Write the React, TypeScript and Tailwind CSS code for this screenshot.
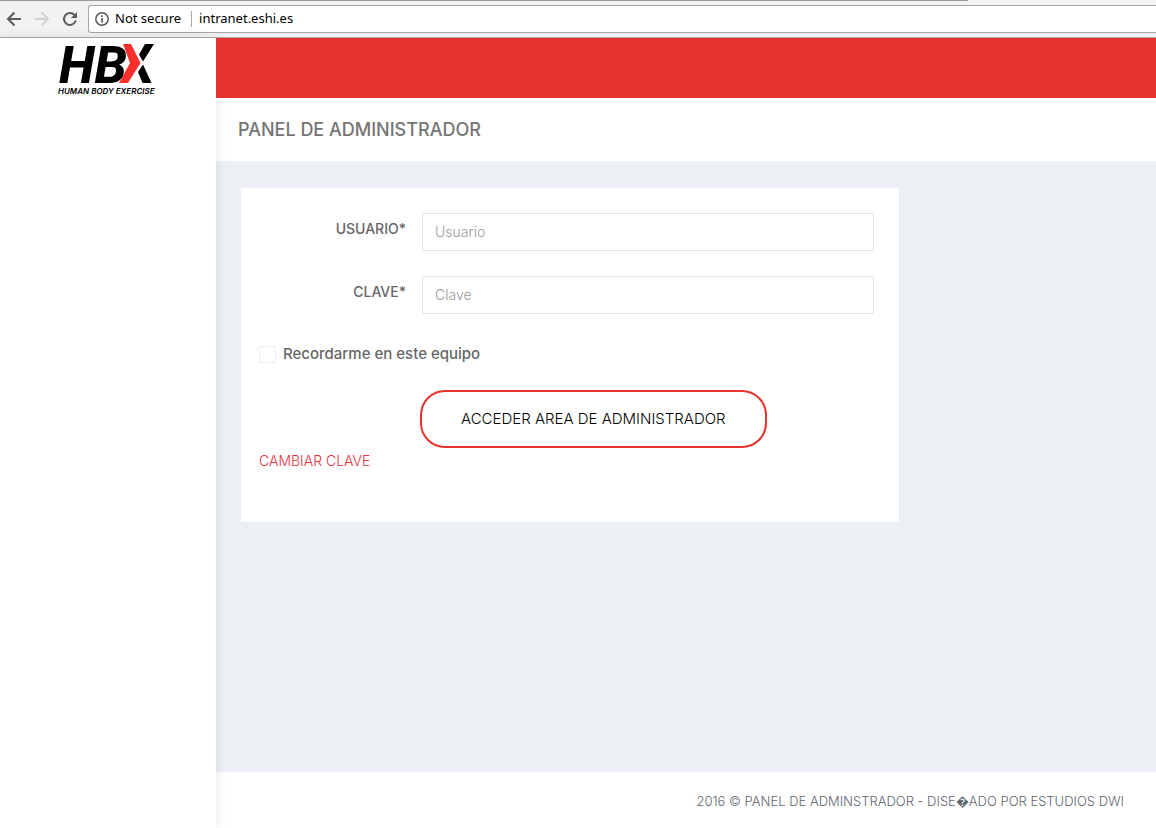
import { useState } from "react";

function BrowserBar() {
  return (
    <div className="flex h-[38px] shrink-0 flex-col border-b border-[#b0abab] bg-[#f2f2f2]">
      <div className="h-px w-[968px] max-w-full bg-[#9b9898]" />
      <div className="flex flex-1 items-center">
        <nav aria-label="Browser" className="flex w-[88px] items-center gap-3 pl-[6px]">
          <button type="button" aria-label="Back" className="text-[#5a5a5a]">
            <svg width="16" height="16" viewBox="0 0 16 16" fill="none" stroke="currentColor" strokeWidth="2">
              <path d="M15 8H2.5M8.5 1.5L2 8l6.5 6.5" />
            </svg>
          </button>
          <button type="button" aria-label="Forward" className="text-[#d2d2d2]">
            <svg width="16" height="16" viewBox="0 0 16 16" fill="none" stroke="currentColor" strokeWidth="2">
              <path d="M1 8h12.500M7.500 1.500L14 8l-6.500 6.500" />
            </svg>
          </button>
          <button type="button" aria-label="Reload" className="text-[#5a5a5a]">
            <svg width="16" height="16" viewBox="0 0 16 16" fill="none" stroke="currentColor" strokeWidth="2">
              <path d="M13.800 9.500A6 6 0 1 1 12.500 4" />
              <path d="M15 1v6H9z" fill="currentColor" stroke="none" />
            </svg>
          </button>
        </nav>
        <div className="flex h-7 flex-1 items-center rounded-l-[3px] border border-r-0 border-[#a9a6a6] bg-white pl-[6px] font-['Noto_Sans','Open_Sans',sans-serif] text-[13px] text-black">
          <svg className="shrink-0" width="14" height="14" viewBox="0 0 14 14" fill="none" stroke="#5a5a5a" strokeWidth="1.500">
            <circle cx="7" cy="7" r="6.200" />
            <path d="M7 6v4.500M7 3.300v1.600" strokeWidth="1.700" />
          </svg>
          <span className="ml-[6px] whitespace-nowrap">Not secure</span>
          <span className="mr-[7px] ml-[10px] h-4 w-px bg-[#a9a6a6]" />
          <input
            aria-label="Address"
            defaultValue="intranet.eshi.es"
            className="min-w-0 flex-1 bg-transparent outline-none"
          />
        </div>
      </div>
    </div>
  );
}

function Logo() {
  return (
    <svg width="98" height="56" viewBox="0 0 98 56" role="img" aria-label="HBX Human Body Exercise" className="overflow-visible">
      <text x="1" y="41" fontFamily="Roboto, sans-serif" fontWeight="800" fontStyle="italic" fontSize="52" fill="#000">
        HB
      </text>
      <path d="M65 2h8l9.500 19L70 41h-9l11-20z" fill="#f9302c" />
      <path d="M87 2h9L85 19.500 81 12.500zM85 22.500L93.500 41H84.500L80 30z" fill="#000" />
      <text x="0" y="52" fontFamily="Inter, sans-serif" fontWeight="600" fontStyle="italic" fontSize="8" fill="#000">
        HUMAN BODY EXERCISE
      </text>
    </svg>
  );
}

const fields = [
  { id: "usuario", label: "USUARIO*", placeholder: "Usuario", type: "text" },
  { id: "clave", label: "CLAVE*", placeholder: "Clave", type: "password" },
];

function LoginCard() {
  const [remember, setRemember] = useState(false);
  return (
    <form
      onSubmit={(e) => e.preventDefault()}
      className="ml-[25px] w-[70%] bg-white pt-[25px] pr-[25px] pb-[50px] pl-[18px]"
    >
      {fields.map((f) => (
        <div key={f.id} className="mb-[25px] grid grid-cols-[147px_1fr] gap-4">
          <label htmlFor={f.id} className="pt-[6px] text-right text-sm leading-5 font-medium text-[#666]">
            {f.label}
          </label>
          <input
            id={f.id}
            type={f.type}
            placeholder={f.placeholder}
            className="h-[38px] w-full min-w-0 border border-[#e3e4e8] px-3 pb-[2px] text-sm font-light outline-none placeholder:text-[#999]"
          />
        </div>
      ))}
      <label className="flex h-[31px] items-center gap-[7px] text-[15px] font-medium text-[#666]">
        <input
          type="checkbox"
          checked={remember}
          onChange={(e) => setRemember(e.target.checked)}
          className="size-[17px] appearance-none border border-[#eeeeee] bg-white checked:bg-[#e6332e]"
        />
        Recordarme en este equipo
      </label>
      <button
        type="submit"
        className="mt-5 ml-[161px] block h-[58px] rounded-[25px] border-2 border-[#e6332e] px-[39px] text-[15px] font-light whitespace-nowrap text-black"
      >
        ACCEDER AREA DE ADMINISTRADOR
      </button>
      <a href="#cambiar-clave" className="mt-[2px] inline-block text-sm leading-[22px] font-light text-[#e6333f]">
        CAMBIAR CLAVE
      </a>
    </form>
  );
}

export default function App() {
  return (
    <div className="flex min-h-screen flex-col bg-white font-['Inter','Lato',sans-serif]">
      <BrowserBar />
      <div className="flex flex-1">
        <aside className="z-10 w-[216px] shrink-0 bg-white pt-1 pl-[58px] shadow-[0_0_12px_rgba(0,0,0,0.1)]">
          <Logo />
        </aside>
        <div className="flex min-w-0 flex-1 flex-col">
          <header className="relative z-20 h-[60px] bg-[#e6332e]" />
          <div className="flex h-[63px] items-center pl-[22px]">
            <h1 className="text-lg font-medium text-[#757575]">PANEL DE ADMINISTRADOR</h1>
          </div>
          <main className="flex-1 bg-[#ecf0f5] pt-[27px]">
            <LoginCard />
          </main>
          <footer className="flex h-14 items-center justify-end pt-1 pr-8 text-[13px] font-light text-[#5f6670]">
            2016 © PANEL DE ADMINSTRADOR - DISE{"\uFFFD"}ADO POR ESTUDIOS DWI
          </footer>
        </div>
      </div>
    </div>
  );
}
